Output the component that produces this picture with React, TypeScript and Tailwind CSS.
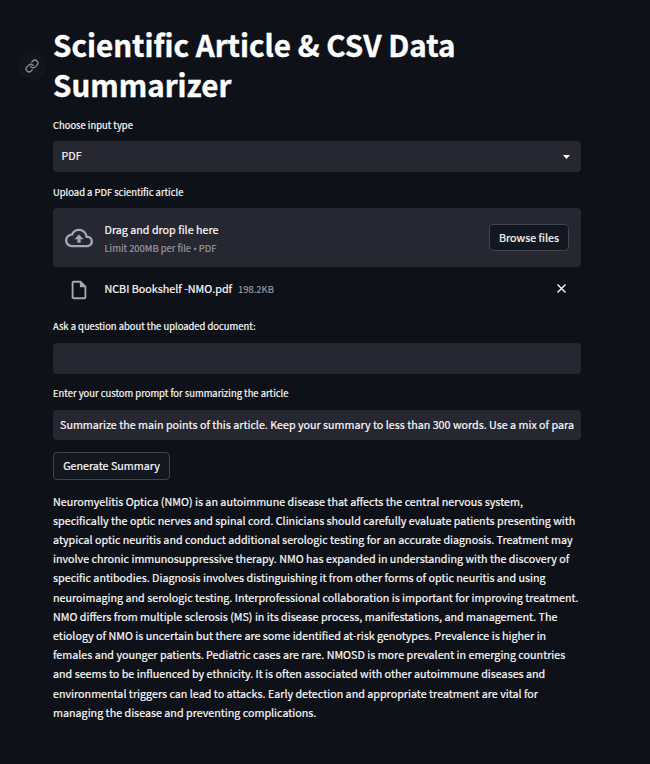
import type { ReactNode } from "react";

const summary = [
  "Neuromyelitis Optica (NMO) is an autoimmune disease that affects the central nervous system,",
  "specifically the optic nerves and spinal cord. Clinicians should carefully evaluate patients presenting with",
  "atypical optic neuritis and conduct additional serologic testing for an accurate diagnosis. Treatment may",
  "involve chronic immunosuppressive therapy. NMO has expanded in understanding with the discovery of",
  "specific antibodies. Diagnosis involves distinguishing it from other forms of optic neuritis and using",
  "neuroimaging and serologic testing. Interprofessional collaboration is important for improving treatment.",
  "NMO differs from multiple sclerosis (MS) in its disease process, manifestations, and management. The",
  "etiology of NMO is uncertain but there are some identified at-risk genotypes. Prevalence is higher in",
  "females and younger patients. Pediatric cases are rare. NMOSD is more prevalent in emerging countries",
  "and seems to be influenced by ethnicity. It is often associated with other autoimmune diseases and",
  "environmental triggers can lead to attacks. Early detection and appropriate treatment are vital for",
  "managing the disease and preventing complications.",
];

function Label({ children }: { children: ReactNode }) {
  return <label className="block h-[18px] text-[9.42px] leading-[17px]">{children}</label>;
}

export default function App() {
  return (
    <main className="h-[764px] overflow-hidden bg-[#0e1117] pl-[18px] pt-[25px] font-['Noto_Sans_CJK_SC','Noto_Sans',sans-serif] text-[10.74px] text-[#fafafa] [-webkit-text-stroke:0.2px]">
      <header className="flex">
        <a className="mt-[27px] flex size-7 shrink-0 items-center justify-center rounded-full bg-[#12151c]" aria-label="Link">
          <svg width="14" height="14" viewBox="0 0 24 24" fill="none" stroke="#8b8d93" strokeWidth="2.3" strokeLinecap="round" strokeLinejoin="round">
            <path d="M10 13a5 5 0 0 0 7.54.54l3-3a5 5 0 0 0-7.07-7.07l-1.72 1.71" />
            <path d="M14 11a5 5 0 0 0-7.54-.54l-3 3a5 5 0 0 0 7.07 7.07l1.71-1.71" />
          </svg>
        </a>
        <h1 className="ml-[7px] whitespace-nowrap text-[29.55px] font-bold text-white [-webkit-text-stroke:0.4px]">
          <span className="block h-10 leading-10">Scientific Article &amp; CSV Data</span>
          <span className="block h-10 leading-10">Summarizer</span>
        </h1>
      </header>

      <div className="ml-[35px] w-[528px]">
        <div className="mt-[12px]"><Label>Choose input type</Label></div>
        <div className="mt-[6px] flex h-[31px] items-center justify-between rounded-[4px] bg-[#262730] pl-[8.5px] pr-[11px]">
          <span className="-mt-px">PDF</span>
          <svg width="7" height="4" viewBox="0 0 7 4" fill="#fafafa"><path d="M0 0h7L3.5 4z" /></svg>
        </div>

        <div className="mt-[12px]"><Label>Upload a PDF scientific article</Label></div>
        <div className="mt-[6px] flex h-[59px] items-center rounded-[4px] bg-[#262730] pl-[12px] pr-[12px]">
          <svg width="28" height="28" viewBox="0 0 24 24" fill="#a3a8b8">
            <path d="M19.35 10.04A7.49 7.49 0 0 0 12 4C9.11 4 6.6 5.64 5.35 8.04A5.994 5.994 0 0 0 0 14c0 3.31 2.69 6 6 6h13c2.76 0 5-2.24 5-5 0-2.64-2.05-4.78-4.65-4.96zM19 18H6c-2.21 0-4-1.79-4-4 0-2.05 1.53-3.76 3.56-3.97l1.07-.11.5-.95A5.469 5.469 0 0 1 12 6c2.62 0 4.88 1.86 5.39 4.43l.3 1.5 1.53.11A2.98 2.98 0 0 1 22 15c0 1.65-1.35 3-3 3zM8 13h2.55v3h2.9v-3H16l-4-4z" />
          </svg>
          <div className="ml-[11.5px] flex flex-1 flex-col pt-[3px]">
            <span className="leading-[19px]">Drag and drop file here</span>
            <span className="text-[9.42px] leading-[18px] text-[#97989e]">Limit 200MB per file <span className="font-['Open_Sans']">•</span> PDF</span>
          </div>
          <button className="h-[27px] w-20 whitespace-nowrap rounded-[4px] border border-[#41444c] bg-[#131720] pt-px">Browse files</button>
        </div>

        <div className="flex h-[45px] items-center pl-[14px] pr-[14px]">
          <svg width="22" height="22" viewBox="0 0 24 24" fill="#a3a8b8" className="ml-[1px] mt-px">
            <path d="M14 2H6c-1.1 0-1.99.9-1.99 2L4 20c0 1.1.89 2 1.99 2H18c1.1 0 2-.9 2-2V8l-6-6zM6 20V4h7v5h5v11H6z" />
          </svg>
          <span className="-mt-px ml-[14.5px]">NCBI Bookshelf -NMO.pdf</span>
          <span className="ml-[6px] flex-1 text-[9.42px] text-[#97989e]">198.2KB</span>
          <svg width="11" height="11" viewBox="0 0 11 11" stroke="#fafafa" strokeWidth="1.4" className="-mt-[2px]"><path d="M1.5 1.5l8 8M9.5 1.5l-8 8" /></svg>
        </div>

        <div className="mt-[6px]"><Label>Ask a question about the uploaded document:</Label></div>
        <div className="mt-[7px] h-[31px] rounded-[4px] bg-[#262730]" />

        <div className="mt-[11px]"><Label>Enter your custom prompt for summarizing the article</Label></div>
        <div className="mt-[7px] h-[30px] whitespace-nowrap rounded-[4px] bg-[#262730] px-[7px] text-[10.72px] leading-[29px]">
          Summarize the main points of this article. Keep your summary to less than 300 words. Use a mix of para
        </div>

        <button className="mt-[12px] block h-[28px] w-[117px] whitespace-nowrap rounded-[4px] border border-[#41444c] bg-[#131720] pt-px">Generate Summary</button>

        <p className="mt-[11.6px] leading-[19.2px]">
          {summary.map((line) => (
            <span key={line} className="block whitespace-nowrap">{line}</span>
          ))}
        </p>
      </div>
    </main>
  );
}
